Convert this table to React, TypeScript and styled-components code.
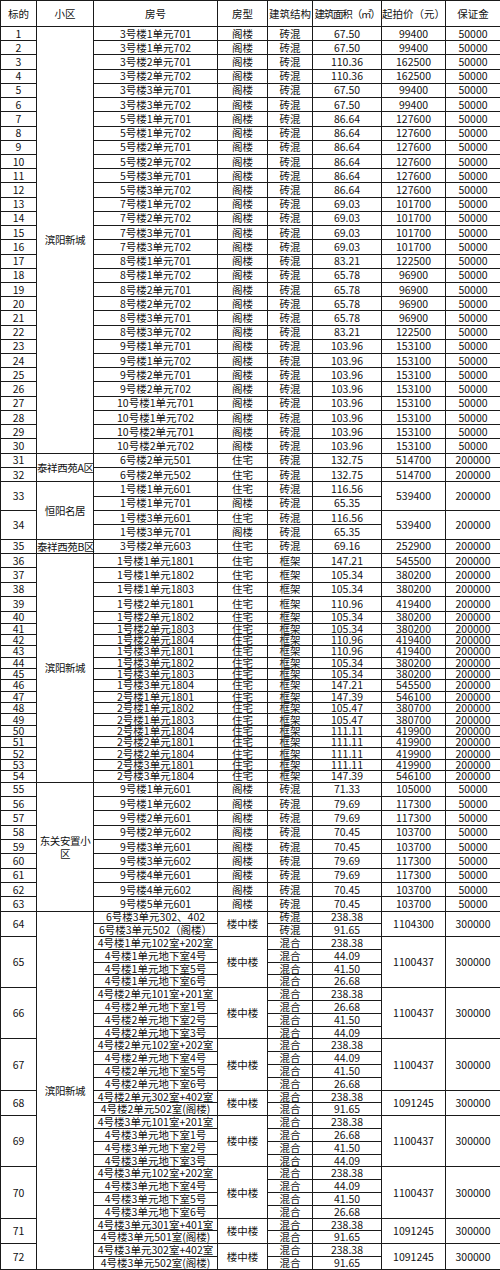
import React from "react"
import styled, { createGlobalStyle } from "styled-components"

type Unit = { room: string; kind?: string; frame: string; area: string }
type Lot = { no: number; units: Unit[]; kind?: string; price: string; deposit: string; h: number }
type Estate = { name: string[]; lots: Lot[] }

const GlobalStyle = createGlobalStyle`
  body {
    margin: 0;
    background: #fff;
  }
`

const Sheet = styled.table`
  width: 500px;
  table-layout: fixed;
  border-collapse: collapse;
  font-family: "Noto Sans CJK SC", sans-serif;
  font-size: 10.5px;
  line-height: 10px;
  color: #111;
`

const Col = styled.col<{ $w: number }>`
  width: ${p => p.$w}px;
`

const Row = styled.tr<{ $h: number }>`
  height: ${p => p.$h}px;
`

const HeadCell = styled.th<{ $tight?: boolean }>`
  border: 1px solid #1a1a1a;
  padding: 0;
  font-weight: normal;
  text-align: center;
  white-space: nowrap;
  letter-spacing: ${p => (p.$tight ? "-1.2px" : "0")};
`

const Cell = styled.td`
  border: 1px solid #1a1a1a;
  padding: 0;
  text-align: center;
  vertical-align: middle;
  white-space: nowrap;
`

const EstateCell = styled.td`
  border: 1px solid #1a1a1a;
  padding: 0;
  text-align: center;
  vertical-align: middle;
  white-space: nowrap;
  line-height: 13px;
  letter-spacing: -0.4px;
`

const attic = (no: number, room: string, area: string, price: string, h: number): Lot => ({
  no,
  units: [{ room, kind: "阁楼", frame: "砖混", area }],
  price,
  deposit: "50000",
  h,
})

const frame = (no: number, room: string, area: string, price: string, h: number): Lot => ({
  no,
  units: [{ room, kind: "住宅", frame: "框架", area }],
  price,
  deposit: "200000",
  h,
})

const duplex = (no: number, units: [string, string, string][], price: string): Lot => ({
  no,
  kind: "楼中楼",
  units: units.map(([room, frame, area]) => ({ room, frame, area })),
  price,
  deposit: "300000",
  h: 12.8,
})

const first30: [string, string, string][] = [
  ["3号楼1单元701", "67.50", "99400"],
  ["3号楼1单元702", "67.50", "99400"],
  ["3号楼2单元701", "110.36", "162500"],
  ["3号楼2单元702", "110.36", "162500"],
  ["3号楼3单元701", "67.50", "99400"],
  ["3号楼3单元702", "67.50", "99400"],
  ["5号楼1单元701", "86.64", "127600"],
  ["5号楼1单元702", "86.64", "127600"],
  ["5号楼2单元701", "86.64", "127600"],
  ["5号楼2单元702", "86.64", "127600"],
  ["5号楼3单元701", "86.64", "127600"],
  ["5号楼3单元702", "86.64", "127600"],
  ["7号楼1单元702", "69.03", "101700"],
  ["7号楼2单元702", "69.03", "101700"],
  ["7号楼3单元701", "69.03", "101700"],
  ["7号楼3单元702", "69.03", "101700"],
  ["8号楼1单元701", "83.21", "122500"],
  ["8号楼1单元702", "65.78", "96900"],
  ["8号楼2单元701", "65.78", "96900"],
  ["8号楼2单元702", "65.78", "96900"],
  ["8号楼3单元701", "65.78", "96900"],
  ["8号楼3单元702", "83.21", "122500"],
  ["9号楼1单元701", "103.96", "153100"],
  ["9号楼1单元702", "103.96", "153100"],
  ["9号楼2单元701", "103.96", "153100"],
  ["9号楼2单元702", "103.96", "153100"],
  ["10号楼1单元701", "103.96", "153100"],
  ["10号楼1单元702", "103.96", "153100"],
  ["10号楼2单元701", "103.96", "153100"],
  ["10号楼2单元702", "103.96", "153100"],
]

const highRise: [string, string, string][] = [
  ["1号楼1单元1801", "147.21", "545500"],
  ["1号楼1单元1802", "105.34", "380200"],
  ["1号楼1单元1803", "105.34", "380200"],
  ["1号楼2单元1801", "110.96", "419400"],
  ["1号楼2单元1802", "105.34", "380200"],
  ["1号楼2单元1803", "105.34", "380200"],
  ["1号楼2单元1804", "110.96", "419400"],
  ["1号楼3单元1801", "110.96", "419400"],
  ["1号楼3单元1802", "105.34", "380200"],
  ["1号楼3单元1803", "105.34", "380200"],
  ["1号楼3单元1804", "147.21", "545500"],
  ["2号楼1单元1801", "147.39", "546100"],
  ["2号楼1单元1802", "105.47", "380700"],
  ["2号楼1单元1803", "105.47", "380700"],
  ["2号楼1单元1804", "111.11", "419900"],
  ["2号楼2单元1801", "111.11", "419900"],
  ["2号楼2单元1804", "111.11", "419900"],
  ["2号楼3单元1801", "111.11", "419900"],
  ["2号楼3单元1804", "147.39", "546100"],
]

const resettle: [string, string, string][] = [
  ["9号楼1单元601", "71.33", "105000"],
  ["9号楼1单元602", "79.69", "117300"],
  ["9号楼2单元601", "79.69", "117300"],
  ["9号楼2单元602", "70.45", "103700"],
  ["9号楼3单元601", "70.45", "103700"],
  ["9号楼3单元602", "79.69", "117300"],
  ["9号楼4单元601", "79.69", "117300"],
  ["9号楼4单元602", "70.45", "103700"],
  ["9号楼5单元601", "70.45", "103700"],
]

// row heights follow the screenshot: the sheet isn't evenly spaced
const highRiseHeight = (i: number) => (i < 4 ? 14.36 : i === 4 ? 12 : 11.36)

const brick = (room: string, kind: string, area: string): Unit => ({ room, kind, frame: "砖混", area })

const estates: Estate[] = [
  { name: ["滨阳新城"], lots: first30.map(([r, a, p], i) => attic(i + 1, r, a, p, 14.22)) },
  {
    name: ["泰祥西苑A区"],
    lots: [
      { no: 31, units: [brick("6号楼2单元501", "住宅", "132.75")], price: "514700", deposit: "200000", h: 14.36 },
      { no: 32, units: [brick("6号楼2单元502", "住宅", "132.75")], price: "514700", deposit: "200000", h: 14.36 },
    ],
  },
  {
    name: ["恒阳名居"],
    lots: [
      {
        no: 33,
        units: [brick("1号楼1单元601", "住宅", "116.56"), brick("1号楼1单元701", "阁楼", "65.35")],
        price: "539400",
        deposit: "200000",
        h: 14.36,
      },
      {
        no: 34,
        units: [brick("1号楼3单元601", "住宅", "116.56"), brick("1号楼3单元701", "阁楼", "65.35")],
        price: "539400",
        deposit: "200000",
        h: 14.36,
      },
    ],
  },
  {
    name: ["泰祥西苑B区"],
    lots: [{ no: 35, units: [brick("3号楼2单元603", "住宅", "69.16")], price: "252900", deposit: "200000", h: 14.36 }],
  },
  { name: ["滨阳新城"], lots: highRise.map(([r, a, p], i) => frame(i + 36, r, a, p, highRiseHeight(i))) },
  { name: ["东关安置小", "区"], lots: resettle.map(([r, a, p], i) => attic(i + 55, r, a, p, 14.33)) },
  {
    name: ["滨阳新城"],
    lots: [
      duplex(64, [
        ["6号楼3单元302、402", "砖混", "238.38"],
        ["6号楼3单元502（阁楼）", "砖混", "91.65"],
      ], "1104300"),
      duplex(65, [
        ["4号楼1单元102室+202室", "混合", "238.38"],
        ["4号楼1单元地下室4号", "混合", "44.09"],
        ["4号楼1单元地下室5号", "混合", "41.50"],
        ["4号楼1单元地下室6号", "混合", "26.68"],
      ], "1100437"),
      duplex(66, [
        ["4号楼2单元101室+201室", "混合", "238.38"],
        ["4号楼2单元地下室1号", "混合", "26.68"],
        ["4号楼2单元地下室2号", "混合", "41.50"],
        ["4号楼2单元地下室3号", "混合", "44.09"],
      ], "1100437"),
      duplex(67, [
        ["4号楼2单元102室+202室", "混合", "238.38"],
        ["4号楼2单元地下室4号", "混合", "44.09"],
        ["4号楼2单元地下室5号", "混合", "41.50"],
        ["4号楼2单元地下室6号", "混合", "26.68"],
      ], "1100437"),
      duplex(68, [
        ["4号楼2单元302室+402室", "混合", "238.38"],
        ["4号楼2单元502室(阁楼)", "混合", "91.65"],
      ], "1091245"),
      duplex(69, [
        ["4号楼3单元101室+201室", "混合", "238.38"],
        ["4号楼3单元地下室1号", "混合", "26.68"],
        ["4号楼3单元地下室2号", "混合", "41.50"],
        ["4号楼3单元地下室3号", "混合", "44.09"],
      ], "1100437"),
      duplex(70, [
        ["4号楼3单元102室+202室", "混合", "238.38"],
        ["4号楼3单元地下室4号", "混合", "44.09"],
        ["4号楼3单元地下室5号", "混合", "41.50"],
        ["4号楼3单元地下室6号", "混合", "26.68"],
      ], "1100437"),
      duplex(71, [
        ["4号楼3单元301室+401室", "混合", "238.38"],
        ["4号楼3单元501室(阁楼)", "混合", "91.65"],
      ], "1091245"),
      duplex(72, [
        ["4号楼3单元302室+402室", "混合", "238.38"],
        ["4号楼3单元502室(阁楼)", "混合", "91.65"],
      ], "1091245"),
    ],
  },
]

const widths = [36, 57, 124, 50, 45, 69, 64, 55]

const App = () => {
  const rows: React.ReactElement[] = []
  estates.forEach(estate => {
    const span = estate.lots.reduce((n, l) => n + l.units.length, 0)
    estate.lots.forEach((lot, li) => {
      const n = lot.units.length
      lot.units.forEach((u, ui) => {
        const top = ui === 0
        rows.push(
          <Row key={`${lot.no}-${ui}`} $h={lot.h}>
            {top && <Cell rowSpan={n}>{lot.no}</Cell>}
            {top && li === 0 && (
              <EstateCell rowSpan={span}>
                {estate.name.map((line, k) => (
                  <React.Fragment key={k}>
                    {k > 0 && <br />}
                    {line}
                  </React.Fragment>
                ))}
              </EstateCell>
            )}
            <Cell>{u.room}</Cell>
            {lot.kind ? top && <Cell rowSpan={n}>{lot.kind}</Cell> : <Cell>{u.kind}</Cell>}
            <Cell>{u.frame}</Cell>
            <Cell>{u.area}</Cell>
            {top && <Cell rowSpan={n}>{lot.price}</Cell>}
            {top && <Cell rowSpan={n}>{lot.deposit}</Cell>}
          </Row>
        )
      })
    })
  })

  return (
    <>
      <GlobalStyle />
      <Sheet>
        <colgroup>
          {widths.map((w, i) => (
            <Col key={i} $w={w} />
          ))}
        </colgroup>
        <thead>
          <Row $h={26}>
            <HeadCell>标的</HeadCell>
            <HeadCell>小区</HeadCell>
            <HeadCell>房号</HeadCell>
            <HeadCell>房型</HeadCell>
            <HeadCell>建筑结构</HeadCell>
            <HeadCell $tight>建筑面积（㎡）</HeadCell>
            <HeadCell>起拍价（元）</HeadCell>
            <HeadCell>保证金</HeadCell>
          </Row>
        </thead>
        <tbody>{rows}</tbody>
      </Sheet>
    </>
  )
}

export default App
